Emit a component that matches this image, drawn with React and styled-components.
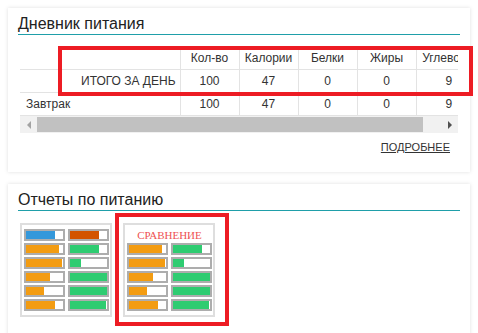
import * as React from "react"
import styled, { createGlobalStyle } from "styled-components"

const GlobalStyle = createGlobalStyle`
  body {
    margin: 0;
    background: #fff;
    font-family: "Liberation Sans", Arial, sans-serif;
    color: #333;
  }
`

const Page = styled.div`
  display: flex;
  flex-direction: column;
  gap: 12px;
  padding: 8px;
  width: 462px;
`

const Card = styled.section`
  background: #fff;
  box-shadow: 0 0 4px rgba(0, 0, 0, 0.13);
  padding: 6px 10px 18px;
`

const Title = styled.h2`
  margin: 0;
  font-size: 16px;
  font-weight: normal;
  line-height: 20px;
  color: #222;
  border-bottom: 1px solid #1f9fa9;
`

const TableArea = styled.div`
  position: relative;
  margin: 12px 2px 0;
`

const TableScroll = styled.div`
  overflow: hidden;
`

const Table = styled.table`
  border-collapse: collapse;
  table-layout: fixed;
  width: 461px;
  font-size: 12px;
  color: #333;
  th,
  td {
    height: 22px;
    padding: 0;
    font-weight: normal;
    text-align: center;
    border-bottom: 1px solid #e3e3e3;
    border-right: 1px solid #e3e3e3;
    white-space: nowrap;
  }
  th:last-child,
  td:last-child {
    border-right: none;
  }
  .total {
    text-align: right;
    padding-right: 4px;
  }
  .meal {
    text-align: left;
    padding-left: 6px;
  }
`

const Highlight = styled.div`
  position: absolute;
  border: 4px solid #ed1c24;
  pointer-events: none;
  box-sizing: border-box;
  left: ${(p) => p.$left}px;
  top: ${(p) => p.$top}px;
  width: ${(p) => p.$width}px;
  height: ${(p) => p.$height}px;
`

const ScrollBar = styled.div`
  display: flex;
  height: 17px;
  background: #f1f1f1;
`

const ArrowButton = styled.div`
  width: 17px;
  display: flex;
  align-items: center;
  justify-content: center;
  &::before {
    content: "";
    border-top: 4px solid transparent;
    border-bottom: 4px solid transparent;
    ${(p) =>
      p.$dir === "left"
        ? "border-right: 4px solid #a3a3a3;"
        : "border-left: 4px solid #505050;"}
  }
`

const Track = styled.div`
  flex: 1;
  display: flex;
  padding: 1px 0;
`

const Thumb = styled.div`
  width: 95.5%;
  background: #c1c1c1;
`

const MoreLink = styled.a`
  display: block;
  margin-top: 8px;
  padding-right: 10px;
  text-align: right;
  font-size: 11px;
  line-height: 13px;
  color: #333;
  text-decoration: underline;
`

const Reports = styled.div`
  display: flex;
  gap: 11px;
  margin: 12px 2px 0;
`

const ReportSlot = styled.div`
  position: relative;
`

const Thumbnail = styled.div`
  display: grid;
  grid-template-columns: 41px 41px;
  grid-auto-rows: 12px;
  column-gap: 3px;
  row-gap: 2px;
  padding: 4px 1px 4px 2px;
  border: 2px solid #dedede;
  background: #fff;
`

const Caption = styled.div`
  grid-column: span 2;
  font-family: "Liberation Serif", "Times New Roman", serif;
  font-size: 11px;
  line-height: 12px;
  text-align: center;
  color: #ee5252;
`

const Bar = styled.div`
  border: 2px solid #adadad;
  background: #fff;
  display: flex;
`

const Fill = styled.div`
  background: ${(p) => p.$color};
`

const columns = ["Кол-во", "Калории", "Белки", "Жиры", "Углеводы"]

const orange = "#f39c12"
const green = "#2ecc71"

const rows = [
  [orange, 89, green, 78],
  [orange, 97, green, 30],
  [orange, 65, green, 99],
  [orange, 49, green, 100],
  [orange, 78, green, 97],
]

const BarRows = ({ data }) =>
  data.map(([c1, w1, c2, w2], i) => (
    <React.Fragment key={i}>
      <Bar>
        <Fill $color={c1} style={{ width: `${w1}%` }} />
      </Bar>
      <Bar>
        <Fill $color={c2} style={{ width: `${w2}%` }} />
      </Bar>
    </React.Fragment>
  ))

const App = () => (
  <>
    <GlobalStyle />
    <Page>
      <Card>
        <Title>Дневник питания</Title>
        <TableArea>
          <TableScroll>
            <Table>
              <colgroup>
                <col style={{ width: 160 }} />
                <col style={{ width: 59 }} />
                <col style={{ width: 59 }} />
                <col style={{ width: 59 }} />
                <col style={{ width: 59 }} />
                <col style={{ width: 65 }} />
              </colgroup>
              <thead>
                <tr>
                  <th></th>
                  {columns.map((c) => (
                    <th key={c}>{c}</th>
                  ))}
                </tr>
              </thead>
              <tbody>
                <tr>
                  <td className="total">ИТОГО ЗА ДЕНЬ</td>
                  <td>100</td>
                  <td>47</td>
                  <td>0</td>
                  <td>0</td>
                  <td>9</td>
                </tr>
                <tr>
                  <td className="meal">Завтрак</td>
                  <td>100</td>
                  <td>47</td>
                  <td>0</td>
                  <td>0</td>
                  <td>9</td>
                </tr>
              </tbody>
            </Table>
          </TableScroll>
          <ScrollBar>
            <ArrowButton $dir="left" />
            <Track>
              <Thumb />
            </Track>
            <ArrowButton $dir="right" />
          </ScrollBar>
          <Highlight $left={38} $top={-1} $width={415} $height={50} />
        </TableArea>
        <MoreLink href="#">ПОДРОБНЕЕ</MoreLink>
      </Card>
      <Card>
        <Title>Отчеты по питанию</Title>
        <Reports>
          <ReportSlot>
            <Thumbnail>
              <BarRows data={[["#3498db", 78, "#d35400", 78], ...rows]} />
            </Thumbnail>
          </ReportSlot>
          <ReportSlot>
            <Thumbnail>
              <Caption>СРАВНЕНИЕ</Caption>
              <BarRows data={rows} />
            </Thumbnail>
            <Highlight $left={-8} $top={-10} $width={114} $height={113} />
          </ReportSlot>
        </Reports>
      </Card>
    </Page>
  </>
)

export default App
